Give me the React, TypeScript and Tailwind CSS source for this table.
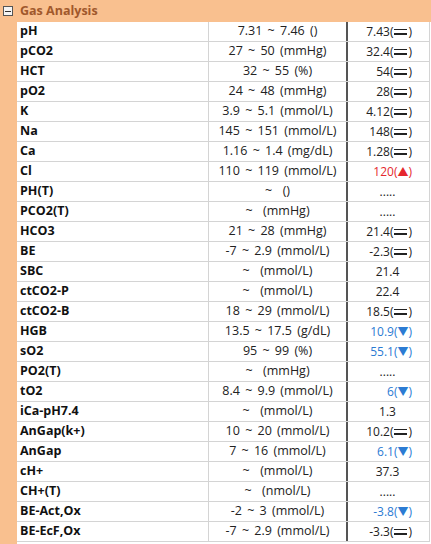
import React from "react";

type Row = { name: string; range: string; value: string; mark?: "eq" | "up" | "down" };

const rows: Row[] = [
  { name: "pH", range: "7.31 ~ 7.46 ()", value: "7.43", mark: "eq" },
  { name: "pCO2", range: "27 ~ 50 (mmHg)", value: "32.4", mark: "eq" },
  { name: "HCT", range: "32 ~ 55 (%)", value: "54", mark: "eq" },
  { name: "pO2", range: "24 ~ 48 (mmHg)", value: "28", mark: "eq" },
  { name: "K", range: "3.9 ~ 5.1 (mmol/L)", value: "4.12", mark: "eq" },
  { name: "Na", range: "145 ~ 151 (mmol/L)", value: "148", mark: "eq" },
  { name: "Ca", range: "1.16 ~ 1.4 (mg/dL)", value: "1.28", mark: "eq" },
  { name: "Cl", range: "110 ~ 119 (mmol/L)", value: "120", mark: "up" },
  { name: "PH(T)", range: "~  ()", value: "....." },
  { name: "PCO2(T)", range: "~  (mmHg)", value: "....." },
  { name: "HCO3", range: "21 ~ 28 (mmHg)", value: "21.4", mark: "eq" },
  { name: "BE", range: "-7 ~ 2.9 (mmol/L)", value: "-2.3", mark: "eq" },
  { name: "SBC", range: "~  (mmol/L)", value: "21.4" },
  { name: "ctCO2-P", range: "~  (mmol/L)", value: "22.4" },
  { name: "ctCO2-B", range: "18 ~ 29 (mmol/L)", value: "18.5", mark: "eq" },
  { name: "HGB", range: "13.5 ~ 17.5 (g/dL)", value: "10.9", mark: "down" },
  { name: "sO2", range: "95 ~ 99 (%)", value: "55.1", mark: "down" },
  { name: "PO2(T)", range: "~  (mmHg)", value: "....." },
  { name: "tO2", range: "8.4 ~ 9.9 (mmol/L)", value: "6", mark: "down" },
  { name: "iCa-pH7.4", range: "~  (mmol/L)", value: "1.3" },
  { name: "AnGap(k+)", range: "10 ~ 20 (mmol/L)", value: "10.2", mark: "eq" },
  { name: "AnGap", range: "7 ~ 16 (mmol/L)", value: "6.1", mark: "down" },
  { name: "cH+", range: "~  (mmol/L)", value: "37.3" },
  { name: "CH+(T)", range: "~  (nmol/L)", value: "....." },
  { name: "BE-Act,Ox", range: "-2 ~ 3 (mmol/L)", value: "-3.8", mark: "down" },
  { name: "BE-EcF,Ox", range: "-7 ~ 2.9 (mmol/L)", value: "-3.3", mark: "eq" },
];

function Value({ r }: { r: Row }) {
  if (!r.mark) {
    return (
      <div className="flex h-full items-center justify-center pr-[2px] text-[#222]">{r.value}</div>
    );
  }
  const color =
    r.mark === "up" ? "text-[#e5282e]" : r.mark === "down" ? "text-[#2c7bd3]" : "text-[#222]";
  return (
    <div className={`flex h-full items-center justify-end pr-[17px] ${color}`}>
      <span>{r.value}(</span>
      {r.mark === "eq" && (
        <span className="mx-[1px] inline-flex w-[13px] flex-col gap-[3px]">
          <span className="block h-[1.5px] bg-[#222]" />
          <span className="block h-[1.5px] bg-[#222]" />
        </span>
      )}
      {r.mark === "up" && <span className="text-[11px] leading-none">▲</span>}
      {r.mark === "down" && <span className="text-[11px] leading-none">▼</span>}
      <span>)</span>
    </div>
  );
}

export default function App() {
  return (
    <div
      className="flex h-[544px] w-[431px] flex-col overflow-hidden bg-white"
      style={{ fontFamily: '"Open Sans", "Noto Sans CJK KR", sans-serif' }}
    >
      <div className="flex h-[22px] shrink-0 items-center bg-[#f9c08f]">
        <div className="ml-[3px] flex h-[10px] w-[10px] items-center justify-center border border-[#555] bg-[#f4f4f4]">
          <span className="block h-[1px] w-[6px] bg-[#333]" />
        </div>
        <span className="ml-[7px] text-[12.5px] font-bold text-[#a0582c]">Gas Analysis</span>
      </div>
      <div className="flex flex-1">
        <div className="w-[17px] shrink-0 bg-[#f9c08f]" />
        <div className="flex flex-col">
          {rows.map((r) => (
            <div
              key={r.name}
              className="grid h-[20px] grid-cols-[192px_137px_2px_81px_1px] border-b border-[#d4d4d4] leading-none"
            >
              <div className="flex items-center border-r border-[#d4d4d4] pl-[3px] text-[12.5px] font-bold text-[#111]">
                {r.name}
              </div>
              <div className="flex items-center justify-center whitespace-pre text-[12.5px] text-[#222] [word-spacing:2px]">
                {r.range}
              </div>
              <div className="bg-[#555]" />
              <div className="text-[12px]">
                <Value r={r} />
              </div>
              <div className="bg-[#d4d4d4]" />
            </div>
          ))}
        </div>
      </div>
    </div>
  );
}
